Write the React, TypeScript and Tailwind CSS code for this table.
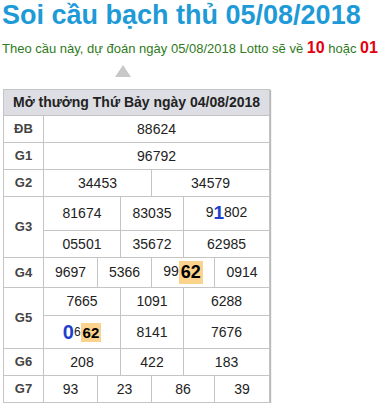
import React from 'react';

type Cell = { span: number; content: React.ReactNode };
type Row = { label?: string; labelRows?: number; height: number; cells: Cell[] };

const Hot = ({ children, size }: { children: React.ReactNode; size: 'sm' | 'lg' }) => (
  <span
    className={
      size === 'lg'
        ? 'inline-block bg-[#fcd38c] px-[2px] text-[18px] font-bold leading-[23px] text-black align-middle'
        : 'inline-block bg-[#fcd38c] px-[2px] text-[15px] font-bold leading-[19px] text-black align-middle'
    }
  >
    {children}
  </span>
);

const rows: Row[] = [
  { label: 'ĐB', height: 27, cells: [{ span: 6, content: '88624' }] },
  { label: 'G1', height: 27, cells: [{ span: 6, content: '96792' }] },
  {
    label: 'G2',
    height: 27,
    cells: [
      { span: 3, content: '34453' },
      { span: 3, content: '34579' },
    ],
  },
  {
    label: 'G3',
    labelRows: 2,
    height: 34,
    cells: [
      { span: 2, content: '81674' },
      { span: 2, content: '83035' },
      {
        span: 2,
        content: (
          <>
            9<span className="text-[19px] font-bold text-[#1d3fd0] align-middle">1</span>802
          </>
        ),
      },
    ],
  },
  {
    height: 27,
    cells: [
      { span: 2, content: '05501' },
      { span: 2, content: '35672' },
      { span: 2, content: '62985' },
    ],
  },
  {
    label: 'G4',
    height: 30,
    cells: [
      { span: 1, content: '9697' },
      { span: 2, content: '5366' },
      {
        span: 2,
        content: (
          <>
            99<Hot size="lg">62</Hot>
          </>
        ),
      },
      { span: 1, content: '0914' },
    ],
  },
  {
    label: 'G5',
    labelRows: 2,
    height: 28,
    cells: [
      { span: 2, content: '7665' },
      { span: 2, content: '1091' },
      { span: 2, content: '6288' },
    ],
  },
  {
    height: 33,
    cells: [
      {
        span: 2,
        content: (
          <>
            <span className="text-[20px] font-bold text-[#1d3fd0] align-middle">0</span>
            <span className="text-[12px] align-middle">6</span>
            <Hot size="sm">62</Hot>
          </>
        ),
      },
      { span: 2, content: '8141' },
      { span: 2, content: '7676' },
    ],
  },
  {
    label: 'G6',
    height: 27,
    cells: [
      { span: 2, content: '208' },
      { span: 2, content: '422' },
      { span: 2, content: '183' },
    ],
  },
  {
    label: 'G7',
    height: 27,
    cells: [
      { span: 1, content: '93' },
      { span: 2, content: '23' },
      { span: 2, content: '86' },
      { span: 1, content: '39' },
    ],
  },
];

export default function App() {
  return (
    <div className="bg-white px-[2px] font-['Liberation_Sans',Arial,sans-serif]">
      {/* Title */}
      <h1 className="h-[30px] text-[27px] font-bold leading-[30px] text-[#1e9ad7]">
        Soi cầu bạch thủ 05/08/2018
      </h1>

      {/* Prediction */}
      <p className="mt-[8px] whitespace-nowrap text-[13px] leading-[20px] text-[#2f7a22]">
        Theo cầu này, dự đoán ngày 05/08/2018 Lotto sẽ về{' '}
        <span className="text-[16px] font-bold text-[#e2000f]">10</span> hoặc{' '}
        <span className="text-[16px] font-bold text-[#e2000f]">01</span>
      </p>

      {/* Arrow */}
      <div className="ml-[113px] mt-[6px] h-0 w-0 border-x-[8px] border-b-[12px] border-x-transparent border-b-[#c8c8c8]" />

      {/* Results table */}
      <table className="ml-[1px] mt-[12px] w-[266px] table-fixed border-collapse border border-[#c4c4c4] text-center shadow-[1px_1px_1px_#b8b8b8]">
        <colgroup>
          <col className="w-[40px]" />
          <col className="w-[54px]" />
          <col className="w-[23px]" />
          <col className="w-[31px]" />
          <col className="w-[32px]" />
          <col className="w-[31px]" />
          <col className="w-[55px]" />
        </colgroup>
        <thead>
          <tr className="h-[26px]">
            <th
              colSpan={7}
              className="border border-[#c4c4c4] bg-[#dcdee4] p-0 text-[14px] font-bold text-[#222]"
            >
              Mở thưởng Thứ Bảy ngày 04/08/2018
            </th>
          </tr>
        </thead>
        <tbody>
          {rows.map((row, i) => (
            <tr key={i} style={{ height: row.height }}>
              {row.label && (
                <td
                  rowSpan={row.labelRows ?? 1}
                  className="border border-[#c4c4c4] p-0 text-[13px] font-bold text-[#444]"
                >
                  {row.label}
                </td>
              )}
              {row.cells.map((c, j) => (
                <td
                  key={j}
                  colSpan={c.span}
                  className="whitespace-nowrap border border-[#c4c4c4] p-0 text-[14px] text-[#222]"
                >
                  {c.content}
                </td>
              ))}
            </tr>
          ))}
        </tbody>
      </table>
    </div>
  );
}
